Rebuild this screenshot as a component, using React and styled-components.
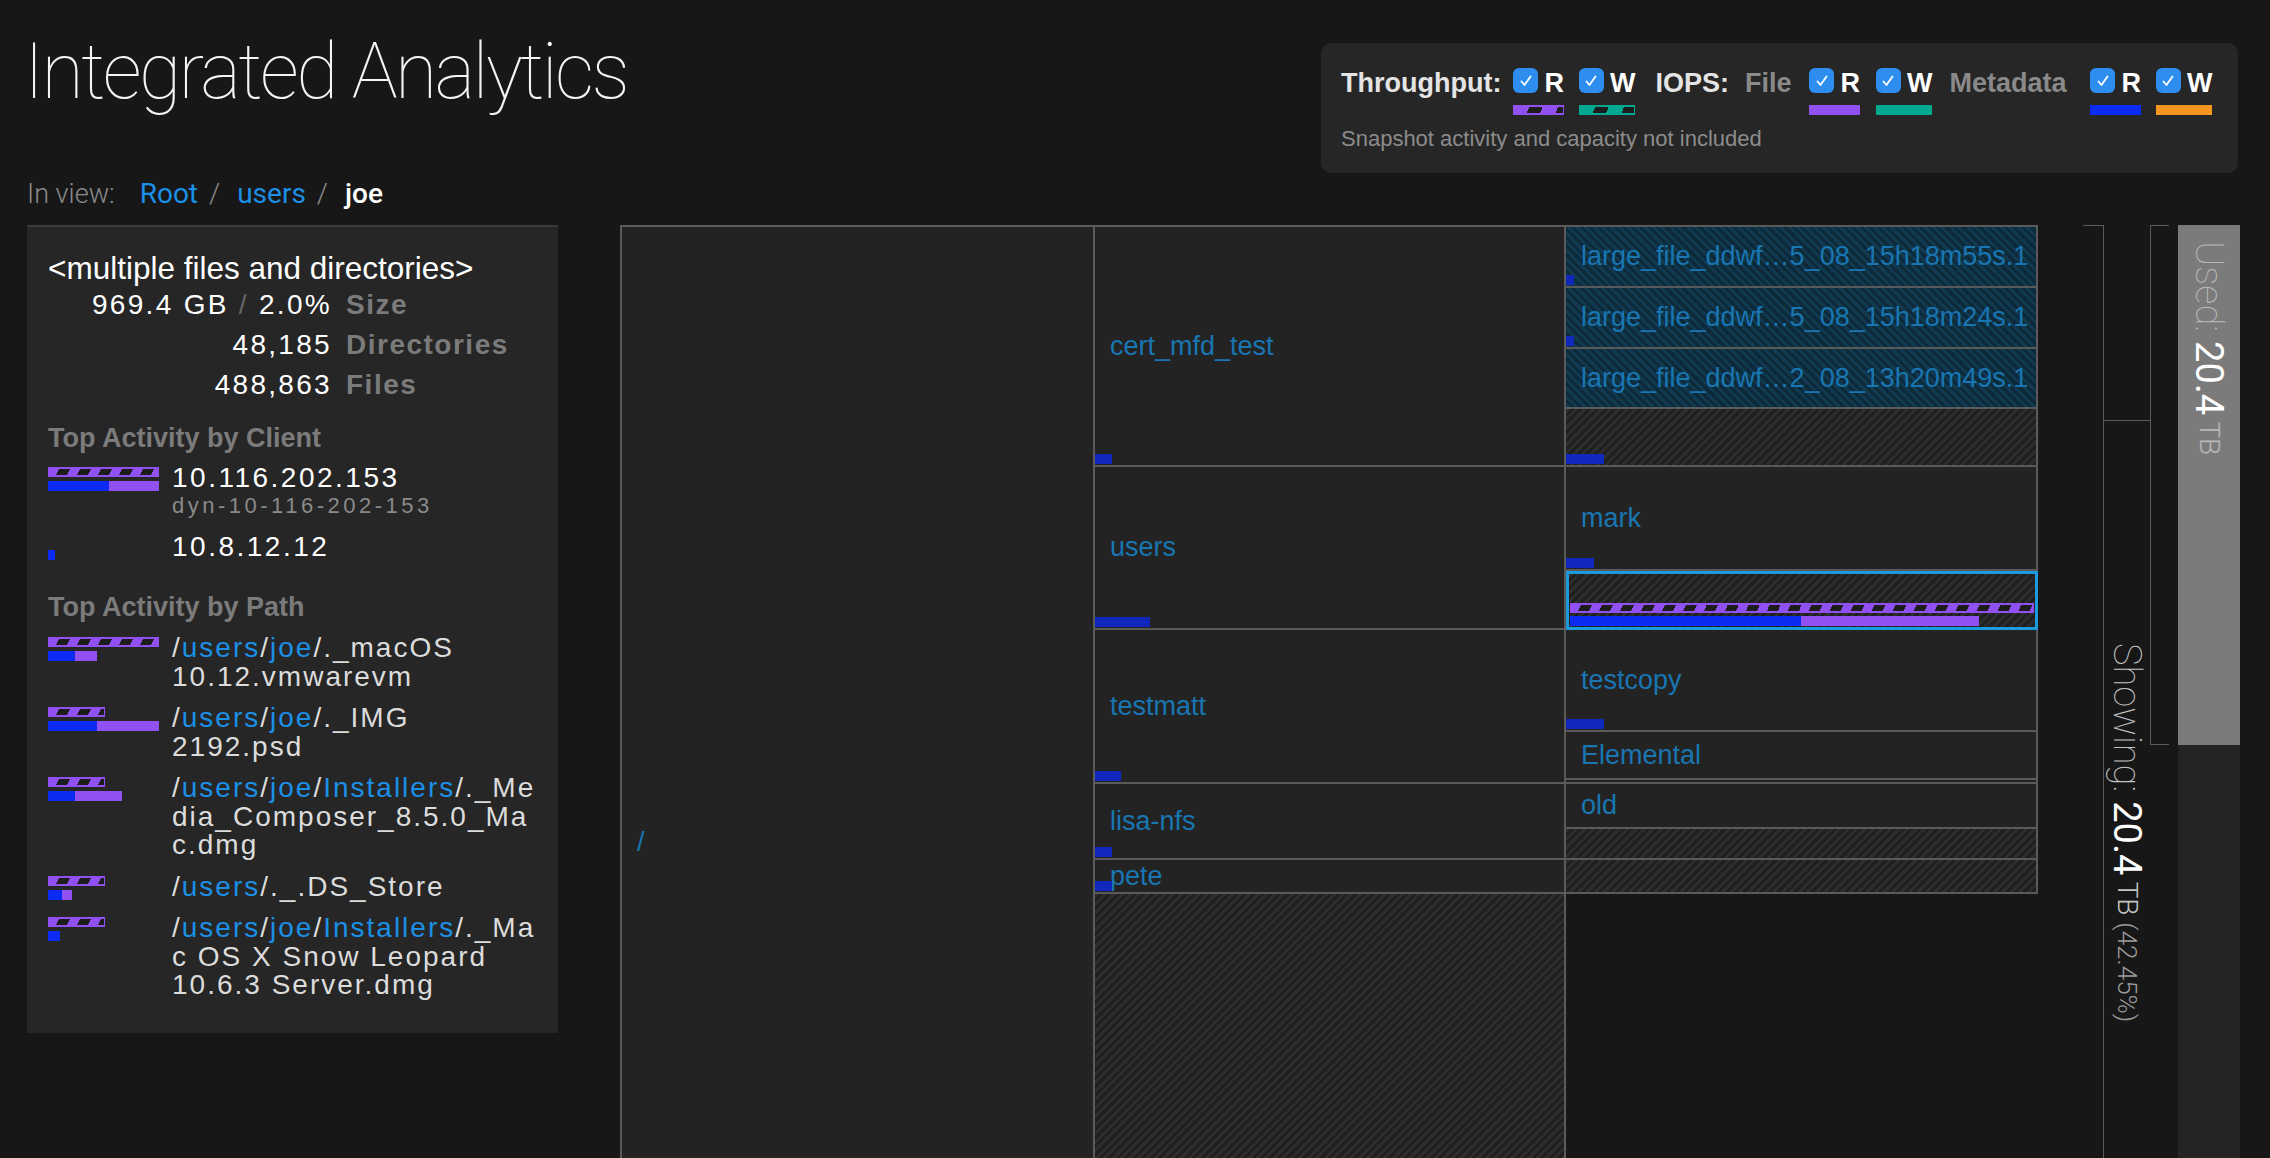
import styled, { createGlobalStyle } from "styled-components";

const GlobalStyle = createGlobalStyle`
  html, body {
    margin: 0;
    padding: 0;
    background: #171717;
    overflow: hidden;
  }
  * {
    box-sizing: border-box;
  }
`;

const PURPLE = "#9150f2";
const BLUE = "#0b2bf2";
const TEAL = "#00a98f";
const LINE = "#5a5a5a";

const Page = styled.div`
  width: 2270px;
  height: 1158px;
  overflow: hidden;
  background: #171717;
  font-family: "Liberation Sans", Arial, sans-serif;
  color: #fff;
`;

const Header = styled.header`
  display: flex;
  justify-content: space-between;
  align-items: flex-start;
  padding: 43px 32px 0 24px;
`;

const Title = styled.h1`
  margin: -9px 0 0;
  font-family: Roboto, sans-serif;
  font-weight: 100;
  font-size: 77px;
  line-height: 77px;
  letter-spacing: -2.6px;
  color: #f4f4f4;
`;

const Legend = styled.div`
  width: 917px;
  height: 130px;
  border-radius: 10px;
  background: #262626;
  padding: 25px 20px 0;
`;

const LegendRow = styled.div`
  display: flex;
  align-items: flex-start;
`;

const LegendLabel = styled.span`
  margin-top: 3px;
  margin-left: ${p => p.$ml || 0}px;
  font-weight: bold;
  font-size: 27px;
  line-height: 25px;
  color: ${p => (p.$muted ? "#8a8a8a" : "#e4e4e4")};
`;

const Toggle = styled.div`
  display: flex;
  flex-direction: column;
  margin-left: ${p => p.$ml}px;
`;

const ToggleTop = styled.div`
  display: flex;
  gap: 6px;
`;

const CheckBox = styled.span`
  width: 25px;
  height: 25px;
  border-radius: 6px;
  background: #2d8ef0;
  display: flex;
  align-items: center;
  justify-content: center;
`;

const ToggleLetter = styled.span`
  margin-top: 3px;
  font-weight: bold;
  font-size: 27px;
  line-height: 25px;
  color: #fff;
`;

const Swatch = styled.div`
  height: 10px;
  margin-top: 9px;
  background: ${p => p.$color};
  ${p =>
    p.$striped &&
    `
    border: 2px solid ${p.$color};
    border-left-width: 1px;
    border-right-width: 1px;
    background: repeating-linear-gradient(115deg, ${p.$color} 0 14px, #1d1d1d 14px 26px);
  `}
`;

const LegendNote = styled.div`
  margin-top: 11px;
  font-size: 22px;
  line-height: 26px;
  color: #8c8c8c;
`;

const Crumbs = styled.nav`
  display: flex;
  align-items: baseline;
  margin-top: 6px;
  padding-left: 27px;
  font-family: Roboto, sans-serif;
  font-size: 28px;
  line-height: 30px;
`;

const CrumbLabel = styled.span`
  font-size: 27px;
  font-weight: 300;
  color: #8a8a8a;
  margin-right: 25px;
`;

const CrumbLink = styled.span`
  color: #1b90e6;
`;

const CrumbSep = styled.span`
  color: #8a8a8a;
  font-weight: 300;
  margin: 0 17px 0 11px;
`;

const CrumbCurrent = styled.span`
  color: #fff;
  font-weight: 500;
`;

const Main = styled.div`
  display: flex;
  align-items: flex-start;
  margin-top: 16px;
  padding-left: 27px;
`;

const Panel = styled.aside`
  width: 531px;
  height: 808px;
  flex: none;
  background: #262626;
  border-top: 2px solid #3a3a3a;
  padding: 24px 21px 0;
`;

const PanelTitle = styled.div`
  font-size: 31.5px;
  line-height: 34px;
  color: #fff;
`;

const Stats = styled.div`
  display: grid;
  grid-template-columns: 284px auto;
  column-gap: 14px;
  font-size: 28px;
  line-height: 40px;
  letter-spacing: 1.5px;
`;

const StatValue = styled.span`
  text-align: right;
  letter-spacing: 2.3px;
  color: #fff;
  white-space: nowrap;
`;

const StatDim = styled.span`
  color: #666;
`;

const StatName = styled.span`
  font-weight: bold;
  color: #7b7b7b;
`;

const SectionTitle = styled.div`
  margin-top: ${p => p.$mt}px;
  font-size: 27px;
  line-height: 32px;
  font-weight: bold;
  color: #7b7b7b;
`;

const ActivityRow = styled.div`
  display: grid;
  grid-template-columns: 111px 1fr;
  column-gap: 13px;
  margin-top: ${p => p.$mt}px;
`;

const Bars = styled.div`
  display: flex;
  flex-direction: column;
  gap: 4px;
  padding-top: ${p => p.$pt}px;
`;

const Stripe = styled.div`
  height: 10px;
  border: 2px solid ${p => p.$color || PURPLE};
  border-left-width: 1px;
  border-right-width: 1px;
  background: repeating-linear-gradient(
    115deg,
    ${p => p.$color || PURPLE} 0 9px,
    #1d1d1d 9px 19px
  );
`;

const StripeSpace = styled.div`
  height: 10px;
`;

const Bar = styled.div`
  display: flex;
  height: 10px;
`;

const Seg = styled.div`
  height: 100%;
  background: ${p => p.$color};
`;

const ClientName = styled.div`
  font-size: 28px;
  line-height: 30px;
  letter-spacing: 2.5px;
  color: #fff;
`;

const ClientHost = styled.div`
  font-size: 22px;
  line-height: 26px;
  letter-spacing: 3.5px;
  color: #8a8a8a;
`;

const PathText = styled.div`
  font-size: 28px;
  line-height: 28.5px;
  letter-spacing: 2px;
  color: #dcdcdc;
  white-space: nowrap;
`;

const PathLink = styled.span`
  color: #1b90e6;
`;

const Treemap = styled.div`
  display: flex;
  align-items: stretch;
  flex: none;
  height: 1232px;
  margin-left: 62px;
  border-top: 2px solid ${LINE};
`;

const Column = styled.div`
  display: flex;
  flex-direction: column;
  width: ${p => p.$w}px;
  flex: none;
  align-self: ${p => (p.$short ? "flex-start" : "stretch")};
  border-left: ${p => (p.$noLeft ? "none" : `2px solid ${LINE}`)};
  border-right: ${p => (p.$right ? `2px solid ${LINE}` : "none")};
`;

const hatchGray = `repeating-linear-gradient(135deg, #2d2d2d 0 3px, #1f1f1f 3px 6px)`;
const hatchBlue = `repeating-linear-gradient(45deg, #113a50 0 3px, #0c2a3a 3px 6px)`;

const Cell = styled.div`
  position: relative;
  display: flex;
  align-items: center;
  flex: ${p => (p.$fill ? "1" : "none")};
  height: ${p => (p.$fill ? "auto" : `${p.$h}px`)};
  padding-left: 15px;
  border-bottom: ${p => (p.$fill ? "none" : `2px solid ${LINE}`)};
  border-right: ${p => (p.$edge ? `2px solid ${LINE}` : "none")};
  background: ${p =>
    p.$kind === "gray" ? hatchGray : p.$kind === "blue" ? hatchBlue : "#232323"};
  font-size: 27px;
  color: #1976b2;
  white-space: nowrap;
  overflow: hidden;
`;

const CellBar = styled.div`
  position: absolute;
  left: 0;
  bottom: 1px;
  height: 10px;
  background: #1128bd;
`;

const SelectedCell = styled.div`
  display: flex;
  flex-direction: column;
  justify-content: flex-end;
  gap: 3px;
  height: ${p => p.$h}px;
  padding: 0 1px 1px;
  border: 3px solid #1a9bdc;
  background: ${hatchGray};
`;

const Gauge = styled.div`
  display: flex;
  align-items: flex-start;
  flex: none;
  height: 940px;
  margin-left: 45px;
`;

const GaugeTick = styled.div`
  width: 20px;
  border-top: 1px solid ${LINE};
`;

const GaugeSpan = styled.div`
  display: flex;
  flex-direction: column;
  width: 47px;
  height: 100%;
  border-left: 1px solid ${LINE};
`;

const GaugeSpanTop = styled.div`
  height: 195px;
  flex: none;
`;

const GaugeSpanBody = styled.div`
  display: flex;
  justify-content: center;
  flex: 1;
  padding-top: 222px;
  border-top: 1px solid ${LINE};
`;

const GaugeBracket = styled.div`
  width: 19px;
  height: 520px;
  border: 1px solid ${LINE};
  border-right: none;
`;

const GaugeTrack = styled.div`
  display: flex;
  flex-direction: column;
  width: 62px;
  height: 100%;
  margin-left: 9px;
  background: #242424;
`;

const GaugeUsed = styled.div`
  display: flex;
  justify-content: center;
  height: 520px;
  padding-top: 16px;
  background: #7b7b7b;
`;

const VerticalText = styled.div`
  writing-mode: vertical-rl;
  font-family: Roboto, sans-serif;
  font-size: 38px;
  line-height: 42px;
  white-space: nowrap;
`;

const VLabel = styled.span`
  font-weight: 100;
  color: ${p => p.$color || "#c4c4c4"};
`;

const VValue = styled.span`
  font-weight: 400;
  color: #fff;
`;

const VUnit = styled.span`
  font-size: ${p => p.$size || 28}px;
  font-weight: 300;
  color: ${p => p.$color || "#c4c4c4"};
`;

const Check = () => (
  <svg width="16" height="16" viewBox="0 0 16 16">
    <path d="M3.5 8.5 L6.5 12 L12.5 3.5" fill="none" stroke="#fff" strokeWidth="1.8" strokeLinecap="round" strokeLinejoin="round" />
  </svg>
);

const toggles = [
  { ml: 12, letter: "R", color: PURPLE, striped: true },
  { ml: 15, letter: "W", color: TEAL, striped: true },
];

const ToggleItem = ({ ml, letter, color, striped }) => (
  <Toggle $ml={ml}>
    <ToggleTop>
      <CheckBox>
        <Check />
      </CheckBox>
      <ToggleLetter>{letter}</ToggleLetter>
    </ToggleTop>
    <Swatch $color={color} $striped={striped} />
  </Toggle>
);

const ActivityBars = ({ stripe, blue, purple, pt }) => (
  <Bars $pt={pt}>
    {stripe ? <Stripe style={{ width: stripe }} /> : <StripeSpace />}
    <Bar>
      <Seg $color={BLUE} style={{ width: blue }} />
      <Seg $color={PURPLE} style={{ width: purple }} />
    </Bar>
  </Bars>
);

const U = <PathLink>users</PathLink>;
const J = <PathLink>joe</PathLink>;
const I = <PathLink>Installers</PathLink>;

const paths = [
  { stripe: 111, blue: 27, purple: 22, lines: [<>/{U}/{J}/._macOS</>, "10.12.vmwarevm"] },
  { stripe: 57, blue: 49, purple: 62, lines: [<>/{U}/{J}/._IMG</>, "2192.psd"] },
  {
    stripe: 57,
    blue: 27,
    purple: 47,
    lines: [<>/{U}/{J}/{I}/._Me</>, "dia_Composer_8.5.0_Ma", "c.dmg"],
  },
  { stripe: 57, blue: 14, purple: 10, lines: [<>/{U}/._.DS_Store</>] },
  {
    stripe: 57,
    blue: 12,
    purple: 0,
    lines: [<>/{U}/{J}/{I}/._Ma</>, "c OS X Snow Leopard", "10.6.3 Server.dmg"],
  },
];

const middleCells = [
  { label: "cert_mfd_test", h: 240, bar: 17 },
  { label: "users", h: 163, bar: 55 },
  { label: "testmatt", h: 154, bar: 26 },
  { label: "lisa-nfs", h: 76, bar: 17 },
  { label: "pete", h: 34, bar: 17 },
];

const rightCells = [
  { label: "large_file_ddwf…5_08_15h18m55s.1", h: 61, bar: 8, kind: "blue" },
  { label: "large_file_ddwf…5_08_15h18m24s.1", h: 61, bar: 8, kind: "blue" },
  { label: "large_file_ddwf…2_08_13h20m49s.1", h: 60, kind: "blue" },
  { h: 58, bar: 38, kind: "gray" },
  { label: "mark", h: 104, bar: 28 },
  { selected: true, h: 59 },
  { label: "testcopy", h: 102, bar: 38 },
  { label: "Elemental", h: 48 },
  { h: 4 },
  { label: "old", h: 45 },
  { h: 31, kind: "gray" },
  { h: 34, kind: "gray" },
];

const App = () => {
  return (
    <Page>
      <GlobalStyle />
      <Header>
        <Title>Integrated Analytics</Title>
        <Legend>
          <LegendRow>
            <LegendLabel>Throughput:</LegendLabel>
            {toggles.map(t => (
              <ToggleItem key={t.letter} {...t} />
            ))}
            <LegendLabel $ml={20}>IOPS:</LegendLabel>
            <LegendLabel $ml={16} $muted>File</LegendLabel>
            <ToggleItem ml={18} letter="R" color={PURPLE} />
            <ToggleItem ml={16} letter="W" color={TEAL} />
            <LegendLabel $ml={17} $muted>Metadata</LegendLabel>
            <ToggleItem ml={24} letter="R" color={BLUE} />
            <ToggleItem ml={15} letter="W" color="#f7941d" />
          </LegendRow>
          <LegendNote>Snapshot activity and capacity not included</LegendNote>
        </Legend>
      </Header>

      <Crumbs>
        <CrumbLabel>In view:</CrumbLabel>
        <CrumbLink>Root</CrumbLink>
        <CrumbSep>/</CrumbSep>
        <CrumbLink>users</CrumbLink>
        <CrumbSep>/</CrumbSep>
        <CrumbCurrent>joe</CrumbCurrent>
      </Crumbs>

      <Main>
        <Panel>
          <PanelTitle>&lt;multiple files and directories&gt;</PanelTitle>
          <Stats>
            <StatValue>
              969.4 GB <StatDim>/</StatDim> 2.0%
            </StatValue>
            <StatName>Size</StatName>
            <StatValue>48,185</StatValue>
            <StatName>Directories</StatName>
            <StatValue>488,863</StatValue>
            <StatName>Files</StatName>
          </Stats>

          <SectionTitle $mt={17}>Top Activity by Client</SectionTitle>
          <ActivityRow $mt={9}>
            <ActivityBars stripe={111} blue={61} purple={50} pt={4} />
            <div>
              <ClientName>10.116.202.153</ClientName>
              <ClientHost>dyn-10-116-202-153</ClientHost>
            </div>
          </ActivityRow>
          <ActivityRow $mt={13}>
            <ActivityBars blue={7} purple={0} pt={4} />
            <ClientName>10.8.12.12</ClientName>
          </ActivityRow>

          <SectionTitle $mt={29}>Top Activity by Path</SectionTitle>
          {paths.map((p, i) => (
            <ActivityRow key={i} $mt={i === 0 ? 11 : 13}>
              <ActivityBars stripe={p.stripe} blue={p.blue} purple={p.purple} pt={3} />
              <div>
                {p.lines.map((line, j) => (
                  <PathText key={j}>{line}</PathText>
                ))}
              </div>
            </ActivityRow>
          ))}
        </Panel>

        <Treemap>
          <Column $w={473}>
            <Cell $fill>/</Cell>
          </Column>
          <Column $w={473} $right>
            {middleCells.map(c => (
              <Cell key={c.label} $h={c.h}>
                {c.label}
                <CellBar style={{ width: c.bar }} />
              </Cell>
            ))}
            <Cell $fill $kind="gray" />
          </Column>
          <Column $w={472} $short $noLeft>
            {rightCells.map((c, i) =>
              c.selected ? (
                <SelectedCell key={i} $h={c.h}>
                  <Stripe />
                  <Bar>
                    <Seg $color={BLUE} style={{ width: 231 }} />
                    <Seg $color={PURPLE} style={{ width: 178 }} />
                  </Bar>
                </SelectedCell>
              ) : (
                <Cell key={i} $h={c.h} $kind={c.kind} $edge>
                  {c.label}
                  {c.bar && <CellBar style={{ width: c.bar }} />}
                </Cell>
              )
            )}
          </Column>
        </Treemap>

        <Gauge>
          <GaugeTick />
          <GaugeSpan>
            <GaugeSpanTop />
            <GaugeSpanBody>
              <VerticalText>
                <VLabel>Showing: </VLabel>
                <VValue>20.4</VValue>
                <VUnit> TB </VUnit>
                <VUnit $size={26} $color="#9a9a9a">(42.45%)</VUnit>
              </VerticalText>
            </GaugeSpanBody>
          </GaugeSpan>
          <GaugeBracket />
          <GaugeTrack>
            <GaugeUsed>
              <VerticalText>
                <VLabel $color="#b8b8b8">Used: </VLabel>
                <VValue>20.4</VValue>
                <VUnit $color="#b8b8b8"> TB</VUnit>
              </VerticalText>
            </GaugeUsed>
          </GaugeTrack>
        </Gauge>
      </Main>
    </Page>
  );
};

export default App;
